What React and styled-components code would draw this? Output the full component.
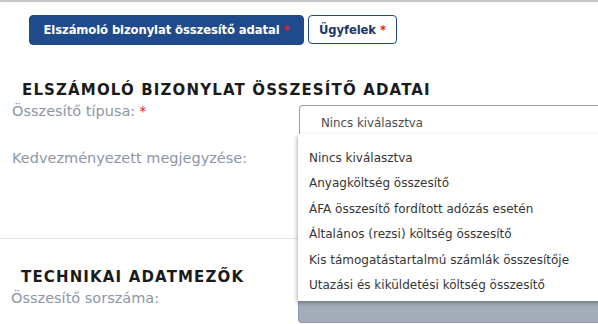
import React from "react";
import styled, { createGlobalStyle } from "styled-components";

const Global = createGlobalStyle`
  html, body { margin: 0; padding: 0; background: #fff; overflow: hidden; }
  body { font-family: "DejaVu Sans", "Open Sans", sans-serif; width: 598px; height: 324px; }
`;

const Page = styled.div`
  width: 598px;
  height: 324px;
  overflow: hidden;
  position: relative;
`;

const Card = styled.div`
  margin-left: -6px;
  width: 640px;
  height: 239px;
  box-sizing: border-box;
  border: 1px solid #e6e6e6;
  border-top: 2px solid #c8c8c8;
  border-radius: 8px;
  padding: 13px 0 0 6px;
`;

const Tabs = styled.div`
  display: flex;
  gap: 4px;
  padding-left: 28px;
`;

const Tab = styled.button`
  height: ${(p) => (p.$active ? 30 : 29)}px;
  box-sizing: border-box;
  padding: 0 ${(p) => (p.$active ? 13.5 : 10)}px;
  border-radius: 4px;
  border: 1px solid #1f4b8c;
  background: ${(p) => (p.$active ? "#1f4b8c" : "#fff")};
  color: ${(p) => (p.$active ? "#fff" : "#1f3768")};
  font-family: "DejaVu Sans", sans-serif;
  font-weight: 700;
  font-size: 11.6px;
  letter-spacing: -0.1px;
  display: flex;
  align-items: center;
  cursor: pointer;
`;

const Req = styled.span`
  color: #e0242f;
  margin-left: 4px;
`;

const Heading = styled.h2`
  margin: ${(p) => p.$mt}px 0 0 21px;
  font-family: "DejaVu Sans", sans-serif;
  font-weight: 700;
  font-size: 15px;
  line-height: 18px;
  letter-spacing: 1.15px;
  color: #1b1b1b;
`;

const FormRow = styled.div`
  display: grid;
  grid-template-columns: 287px 1fr;
  padding-left: 11px;
  height: ${(p) => p.$h}px;
`;

const Label = styled.div`
  font-family: "DejaVu Sans", sans-serif;
  font-size: 14.5px;
  line-height: 18px;
  color: #8d96a6;
  padding-top: ${(p) => p.$pt || 0}px;
  white-space: nowrap;
`;

const Field = styled.div`
  position: relative;
  padding-top: ${(p) => p.$pt || 0}px;
`;

const Select = styled.div`
  height: 33px;
  box-sizing: border-box;
  border: 1px solid #9aa1af;
  border-right: none;
  border-bottom-color: #8a8a8a;
  border-radius: 4px 0 0 0;
  display: flex;
  align-items: center;
  padding: 3px 0 0 21px;
  font-size: 11.8px;
  color: #4e4e4e;
  background: #fff;
`;

const Menu = styled.ul`
  position: absolute;
  left: -1px;
  top: 35px;
  width: 320px;
  margin: 0;
  padding: 12px 0 3px;
  list-style: none;
  background: #fff;
  box-shadow: -1px 2px 4px rgba(0, 0, 0, 0.3);
  z-index: 5;
`;

const Option = styled.li`
  height: 25.4px;
  line-height: 25.4px;
  padding-left: 11px;
  font-size: 12px;
  color: #353535;
  white-space: nowrap;
`;

const GrayInput = styled.div`
  margin-top: ${(p) => p.$mt}px;
  height: 45px;
  box-sizing: border-box;
  background: #a4adba;
  border: 1px solid #8f98a6;
  border-right: none;
  border-radius: 0 0 0 4px;
`;

const options = [
  "Nincs kiválasztva",
  "Anyagköltség összesítő",
  "ÁFA összesítő fordított adózás esetén",
  "Általános (rezsi) költség összesítő",
  "Kis támogatástartalmú számlák összesítője",
  "Utazási és kiküldetési költség összesítő",
];

export default function App() {
  return (
    <Page>
      <Global />
      <Card>
        <Tabs>
          <Tab $active>
            Elszámoló bizonylat összesítő adatai<Req>*</Req>
          </Tab>
          <Tab>
            Ügyfelek<Req>*</Req>
          </Tab>
        </Tabs>
        <Heading $mt={36}>ELSZÁMOLÓ BIZONYLAT ÖSSZESÍTŐ ADATAI</Heading>
        <FormRow $h={46}>
          <Label $pt={3}>
            Összesítő típusa:<Req>*</Req>
          </Label>
          <Field $pt={6}>
            <Select>Nincs kiválasztva</Select>
            <Menu>
              {options.map((o) => (
                <Option key={o}>{o}</Option>
              ))}
            </Menu>
          </Field>
        </FormRow>
        <FormRow $h={39}>
          <Label $pt={4}>Kedvezményezett megjegyzése:</Label>
          <Field />
        </FormRow>
      </Card>
      <Heading $mt={29}>TECHNIKAI ADATMEZŐK</Heading>
      <FormRow $h={40}>
        <Label $pt={3}>Összesítő sorszáma:</Label>
        <Field>
          <GrayInput $mt={-8} />
        </Field>
      </FormRow>
    </Page>
  );
}
